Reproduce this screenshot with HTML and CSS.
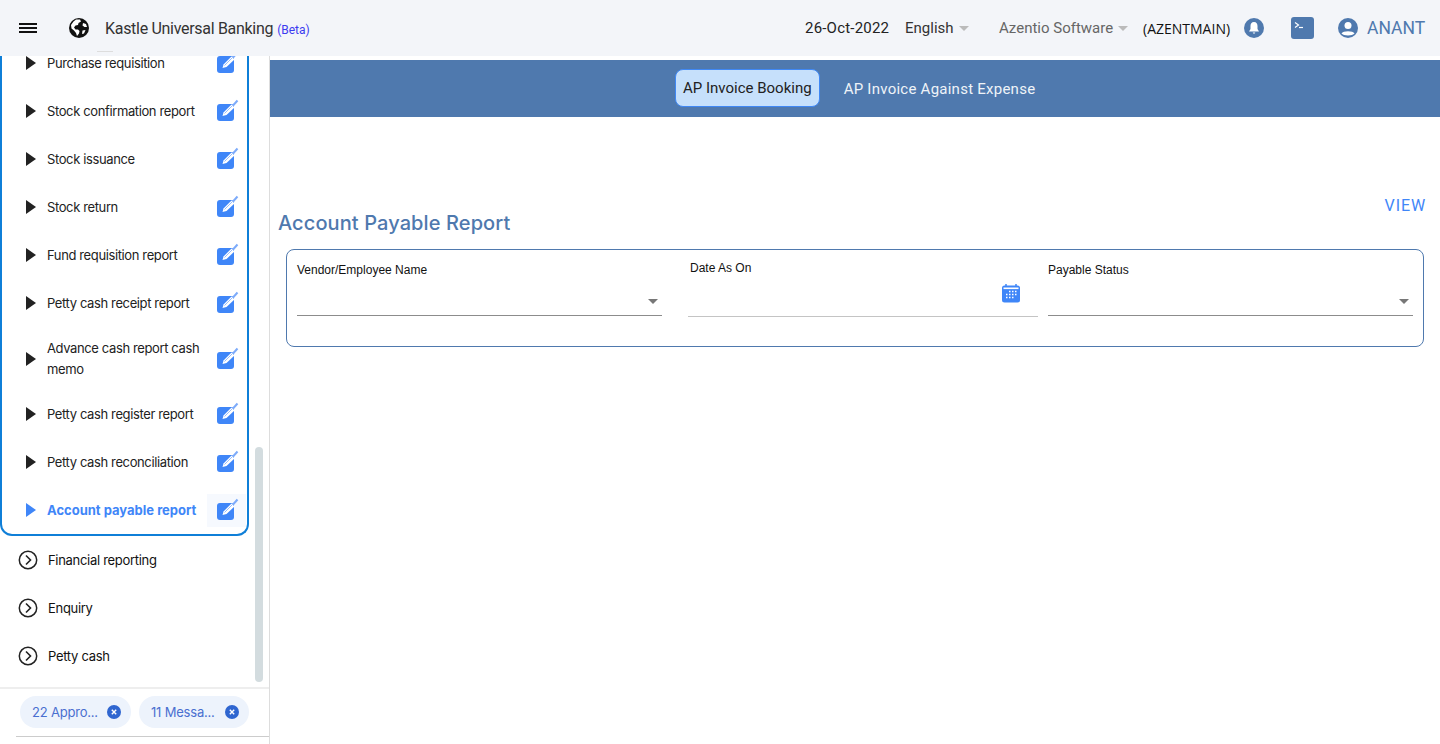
FILE: index.html
```html
<!DOCTYPE html>
<html lang="en">
<head>
  <meta charset="UTF-8">
  <meta name="viewport" content="width=device-width, initial-scale=1.0">
  <title>Kastle Universal Banking</title>
  <link rel="stylesheet" href="styles.css">
</head>
<body>
  <svg class="icon-defs" width="0" height="0">
    <symbol id="edit" viewBox="0 0 22 22" overflow="visible">
      <rect x="0" y="4" width="17" height="17" rx="3" fill="#3f86f8"/>
      <path d="M16 5.5 L20.5 0.5" stroke="#7dabfa" stroke-width="2"/>
      <path d="M5.5 16 L6.5 12.5 L14.5 4.5 L17.5 7.5 L9.5 15 Z" fill="#fff"/>
      <path d="M7.5 13.5 L15 6" stroke="#8db5fb" stroke-width="0.9"/>
    </symbol>
    <symbol id="chevron" viewBox="0 0 20 20">
      <circle cx="10" cy="10" r="8.7" fill="none" stroke="#222" stroke-width="1.5"/>
      <path d="M8 5.5 L12.5 10 L8 14.5" fill="none" stroke="#222" stroke-width="1.6"/>
    </symbol>
    <symbol id="close" viewBox="0 0 14 14">
      <circle cx="7" cy="7" r="7" fill="#2f66d0"/>
      <path d="M4.8 4.8 L9.2 9.2 M9.2 4.8 L4.8 9.2" stroke="#fff" stroke-width="1.4"/>
    </symbol>
  </svg>

  <header class="topbar">
    <div class="hamburger"><span></span><span></span><span></span></div>
    <svg class="globe" width="20" height="20" viewBox="0 0 20 20">
      <circle cx="10" cy="10" r="10" fill="#111"/>
      <path d="M7 1.5 L11 1.5 L12 3.5 L9.5 5 L9 7 L6.5 7.5 L5 9.5 L6.5 11.5 L9 11.5 L10.5 13 L10 15.5 L8 18 L7 15 L5 12.5 L2.5 10.5 L2 7 L4.5 3.5 Z" fill="#fff"/>
      <path d="M14 5 L17 6 L18 9 L15.5 9 L13.5 7.5 Z M13.5 12.5 L16.5 12 L15 15.5 L13 16 Z" fill="#fff"/>
    </svg>
    <div class="app-name"><span class="app-title">Kastle Universal Banking</span> <small>(Beta)</small></div>
    <div class="date">26-Oct-2022</div>
    <div class="lang">English<i class="caret"></i></div>
    <div class="company">Azentio Software<i class="caret"></i></div>
    <div class="branch">(AZENTMAIN)</div>
    <svg class="bell" width="20" height="20" viewBox="0 0 20 20">
      <circle cx="10" cy="10" r="10" fill="#4f79ae"/>
      <path d="M10 4 C7.5 4 6.5 6 6.5 8 L6.5 11 L5 13.5 L15 13.5 L13.5 11 L13.5 8 C13.5 6 12.5 4 10 4 Z" fill="#fff"/>
      <path d="M8.6 14.5 H11.4 L10 16 Z" fill="#fff"/>
    </svg>
    <svg class="terminal" width="23" height="22" viewBox="0 0 23 22">
      <rect width="23" height="22" rx="3" fill="#4f79ae"/>
      <path d="M4 5.5 L7.5 8 L4 10.5" fill="none" stroke="#fff" stroke-width="1.2"/>
      <path d="M8 10.5 H12" stroke="#fff" stroke-width="1.2"/>
    </svg>
    <svg class="user" width="20" height="20" viewBox="0 0 20 20">
      <circle cx="10" cy="10" r="10" fill="#4f79ae"/>
      <circle cx="10" cy="7.5" r="3.5" fill="#fff"/>
      <path d="M3.5 15.5 C5 12.5 15 12.5 16.5 15.5 C14.5 18 5.5 18 3.5 15.5 Z" fill="#fff"/>
    </svg>
    <div class="username">ANANT</div>
    <span class="grip"></span>
  </header>

  <div class="layout">
    <aside class="sidebar">
      <div class="menu">
        <div class="submenu">
          <div class="row"><i class="tri"></i><span>Purchase requisition</span><svg class="edit"><use href="#edit"/></svg></div>
          <div class="row"><i class="tri"></i><span>Stock confirmation report</span><svg class="edit"><use href="#edit"/></svg></div>
          <div class="row"><i class="tri"></i><span>Stock issuance</span><svg class="edit"><use href="#edit"/></svg></div>
          <div class="row"><i class="tri"></i><span>Stock return</span><svg class="edit"><use href="#edit"/></svg></div>
          <div class="row"><i class="tri"></i><span>Fund requisition report</span><svg class="edit"><use href="#edit"/></svg></div>
          <div class="row"><i class="tri"></i><span>Petty cash receipt report</span><svg class="edit"><use href="#edit"/></svg></div>
          <div class="row tall"><i class="tri"></i><span>Advance cash report cash memo</span><svg class="edit"><use href="#edit"/></svg></div>
          <div class="row"><i class="tri"></i><span>Petty cash register report</span><svg class="edit"><use href="#edit"/></svg></div>
          <div class="row"><i class="tri"></i><span>Petty cash reconciliation</span><svg class="edit"><use href="#edit"/></svg></div>
          <div class="row active"><i class="tri"></i><span>Account payable report</span><b class="edit-wrap"><svg class="edit"><use href="#edit"/></svg></b></div>
        </div>
        <div class="group"><svg class="chevron"><use href="#chevron"/></svg>Financial reporting</div>
        <div class="group"><svg class="chevron"><use href="#chevron"/></svg>Enquiry</div>
        <div class="group"><svg class="chevron"><use href="#chevron"/></svg>Petty cash</div>
      </div>
      <div class="scroll-thumb"></div>
      <div class="chips">
        <div class="chip">22 Appro...<svg class="chip-x"><use href="#close"/></svg></div>
        <div class="chip">11 Messa...<svg class="chip-x"><use href="#close"/></svg></div>
      </div>
      <div class="side-line"></div>
    </aside>

    <main class="content">
      <nav class="tabs">
        <div class="tab on">AP Invoice Booking</div>
        <div class="tab">AP Invoice Against Expense</div>
      </nav>
      <div class="view-link">VIEW</div>
      <h1 class="page-title">Account Payable Report</h1>
      <form class="filter">
        <div class="field w-one">
          <label>Vendor/Employee Name</label>
          <div class="input"><i class="caret dark"></i></div>
        </div>
        <div class="field w-two">
          <label>Date As On</label>
          <div class="input">
            <svg class="cal" width="20" height="20" viewBox="0 0 20 20">
              <rect x="1" y="2.5" width="18" height="17" rx="2.5" fill="#3f86f8"/>
              <path d="M5 1 V4 M15 1 V4" stroke="#3f86f8" stroke-width="1.5"/>
              <rect x="2.5" y="4.5" width="15" height="1.6" fill="#fff"/>
              <path d="M8 8.5h1.5M11 8.5h1.5M14 8.5h1.5M5 11.5h1.5M8 11.5h1.5M11 11.5h1.5M14 11.5h1.5M5 14.5h1.5M8 14.5h1.5M11 14.5h1.5" stroke="#fff" stroke-width="1.5"/>
            </svg>
          </div>
        </div>
        <div class="field w-one">
          <label>Payable Status</label>
          <div class="input"><i class="caret dark"></i></div>
        </div>
      </form>
    </main>
  </div>
</body>
</html>
```

FILE: styles.css
```css
body {
  font-family: Inter, "Liberation Sans", sans-serif;
  margin: 0;
  padding: 0;
  background-color: #fff;
  color: #222;
  height: 744px;
  overflow: hidden;
}

.icon-defs {
  position: absolute;
}

/* top bar */
.topbar {
  display: flex;
  align-items: center;
  height: 56px;
  background-color: #f3f5f9;
  position: relative;
  font-family: Roboto, sans-serif;
  font-size: 15px;
  color: #222;
}

.hamburger {
  margin-left: 19px;
  width: 18px;
  display: flex;
  flex-direction: column;
  gap: 2px;
}

.hamburger span {
  display: block;
  height: 2px;
  background: #111;
}

.globe {
  margin-left: 32px;
}

.app-name {
  margin-left: 16px;
  font-size: 16px;
  color: #333;
  width: 700px;
  flex: none;
}

.app-title {
  letter-spacing: -0.3px;
}

.app-name small {
  font-size: 12px;
  color: #3b3bf0;
}

.date {
  width: 100px;
  letter-spacing: 0.2px;
}

.lang {
  color: #333;
  width: 94px;
  display: flex;
  align-items: center;
}

.company {
  color: #666;
  width: 144px;
  display: flex;
  align-items: center;
}

.caret {
  display: inline-block;
  margin-left: 5px;
  width: 0;
  height: 0;
  border-left: 5px solid transparent;
  border-right: 5px solid transparent;
  border-top: 5px solid #bbb;
}

.caret.dark {
  border-top-color: #777;
}

.branch {
  font-family: "Open Sans", sans-serif;
  font-size: 14px;
  color: #111;
  width: 101px;
}

.terminal {
  margin-left: 27px;
}

.user {
  margin-left: 24px;
}

.username {
  margin-left: 9px;
  font-size: 17.5px;
  color: #4f79ae;
}

.grip {
  position: absolute;
  left: 97px;
  top: 51px;
  width: 16px;
  height: 1px;
  background: #ddd;
}

.layout {
  display: flex;
  height: 688px;
}

/* sidebar */
.sidebar {
  width: 269px;
  flex: none;
  border-right: 1px solid #ddd;
  position: relative;
  overflow: hidden;
}

.menu {
  height: 631px;
  overflow: hidden;
}

.submenu {
  width: 249px;
  box-sizing: border-box;
  margin-top: -17px;
  border: 2px solid #0f7fd8;
  border-top: 0;
  border-radius: 0 0 12px 12px;
}

.row {
  display: flex;
  align-items: center;
  height: 48px;
  padding-left: 24px;
  font-size: 13px;
  line-height: 21px;
  letter-spacing: -0.38px;
  color: #222;
}

.row.tall {
  height: 63px;
}

.row span {
  width: 160px;
  margin-left: 11px;
}

.tri {
  flex: none;
  width: 0;
  height: 0;
  border-top: 7.5px solid transparent;
  border-bottom: 7.5px solid transparent;
  border-left: 10px solid #222;
}

.edit {
  width: 22px;
  height: 22px;
  margin-left: 10px;
  overflow: visible;
  flex: none;
}

.row.active {
  color: #3f86f8;
  font-weight: 700;
  letter-spacing: 0;
}

.row.active .tri {
  border-left-color: #3f86f8;
}

.edit-wrap {
  display: flex;
  align-items: center;
  height: 33px;
  width: 39px;
  background: #f6f9fe;
}

.group {
  display: flex;
  align-items: center;
  height: 48px;
  padding-left: 18px;
  font-size: 13px;
  letter-spacing: -0.3px;
  color: #111;
}

.chevron {
  width: 20px;
  height: 20px;
  margin-right: 10px;
}

.scroll-thumb {
  position: absolute;
  left: 255px;
  top: 391px;
  width: 8px;
  height: 235px;
  border-radius: 4px;
  background: #d3dcdf;
}

.chips {
  display: flex;
  gap: 8px;
  height: 49px;
  box-sizing: border-box;
  padding: 7px 0 0 20px;
  border-top: 2px solid #eee;
}

.chip {
  display: flex;
  align-items: center;
  justify-content: space-between;
  box-sizing: border-box;
  width: 111px;
  height: 32px;
  padding: 0 10px 0 12px;
  border-radius: 16px;
  background: #edf3fc;
  font-size: 13px;
  letter-spacing: -0.2px;
  color: #4a6fd0;
}

.chip + .chip {
  width: 110px;
}

.chip-x {
  width: 14px;
  height: 14px;
}

.side-line {
  margin-left: 16px;
  height: 1px;
  background: #ccc;
}

/* main */
.content {
  flex: 1;
  padding-top: 4px;
  position: relative;
}

.tabs {
  display: flex;
  align-items: center;
  gap: 24px;
  height: 57px;
  padding-left: 405px;
  background-color: #4f79ae;
  font-family: Roboto, sans-serif;
  font-size: 15px;
  letter-spacing: 0.25px;
}

.tab {
  color: #eef3f8;
}

.tab.on {
  display: flex;
  align-items: center;
  height: 38px;
  margin-top: -1px;
  box-sizing: border-box;
  padding: 0 7px;
  background: #c6e0fb;
  border: 1px solid #3f88f5;
  border-radius: 8px;
  color: #222;
  letter-spacing: 0;
}

.view-link {
  position: absolute;
  right: 14px;
  top: 140px;
  font-family: Roboto, sans-serif;
  font-size: 16px;
  letter-spacing: 0.9px;
  color: #3f86f8;
}

.page-title {
  margin: 94px 0 0 8px;
  font-size: 20px;
  line-height: 24px;
  font-weight: 500;
  letter-spacing: 0.1px;
  color: #4f79ae;
}

.filter {
  display: flex;
  margin: 14px 16px 0 16px;
  height: 98px;
  box-sizing: border-box;
  padding: 0 10px;
  border: 1px solid #4f79ae;
  border-radius: 8px;
}

.field label {
  display: block;
  font-family: "Liberation Sans", sans-serif;
  font-size: 12px;
  line-height: 14px;
  color: #111;
  padding-top: 13px;
}

.input {
  display: flex;
  align-items: center;
  justify-content: flex-end;
  height: 38px;
  border-bottom: 1px solid #8c8c8c;
}

.input .caret {
  margin: 10px 4px 0 0;
}

.w-one {
  width: 365px;
}

.w-two {
  width: 350px;
  margin: 0 10px 0 26px;
}

.w-two label {
  padding: 11px 0 0 2px;
}

.w-two .input {
  height: 41px;
  border-bottom-color: #c4c4c4;
}

.cal {
  margin: 0 17px 5px 0;
}
```
